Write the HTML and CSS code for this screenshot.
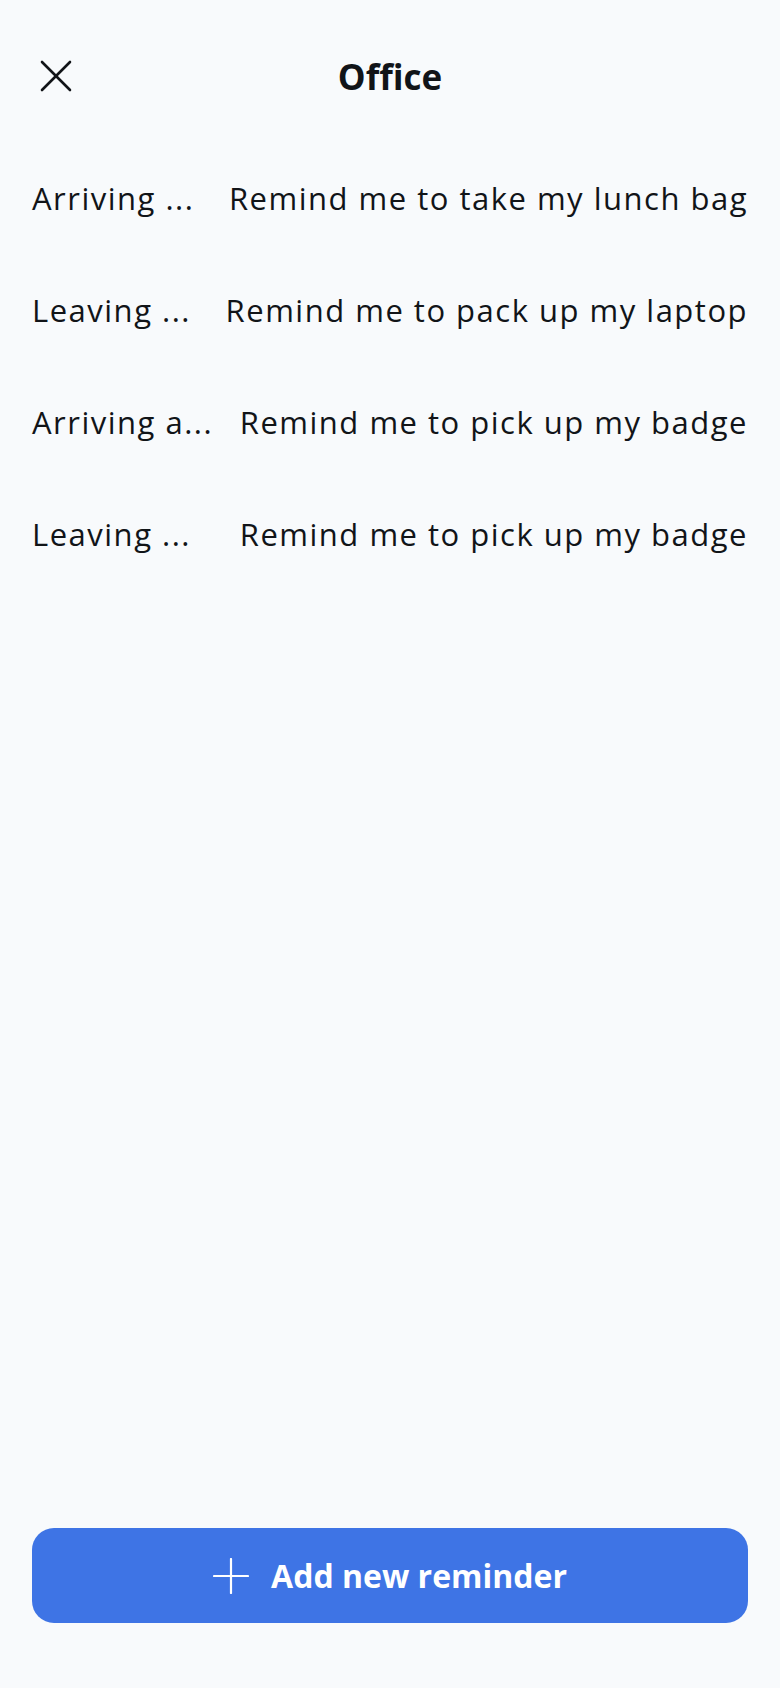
FILE: index.html
```html
<!DOCTYPE html>
<html lang="en">
<head>
<meta charset="utf-8">
<title>Office</title>
<link rel="stylesheet" href="styles.css">
</head>
<body>
<div class="screen">
  <header class="header">
    <button class="close" aria-label="Close">
      <svg width="32" height="32" viewBox="0 0 32 32" fill="none" stroke="#111418" stroke-width="2.6" stroke-linecap="round">
        <line x1="2" y1="2" x2="30" y2="30"/>
        <line x1="30" y1="2" x2="2" y2="30"/>
      </svg>
    </button>
    <h1 class="title">Office</h1>
    <div></div>
  </header>
  <ul class="list">
    <li class="row"><span class="trigger">Arriving ...</span><span class="reminder">Remind me to take my lunch bag</span></li>
    <li class="row"><span class="trigger">Leaving ...</span><span class="reminder">Remind me to pack up my laptop</span></li>
    <li class="row"><span class="trigger">Arriving a...</span><span class="reminder">Remind me to pick up my badge</span></li>
    <li class="row"><span class="trigger">Leaving ...</span><span class="reminder">Remind me to pick up my badge</span></li>
  </ul>
  <button class="add">
    <svg width="36" height="36" viewBox="0 0 36 36" fill="none" stroke="#ffffff" stroke-width="2.2" stroke-linecap="round">
      <line x1="18" y1="1" x2="18" y2="35"/>
      <line x1="1" y1="18" x2="35" y2="18"/>
    </svg>
    <span>Add new reminder</span>
  </button>
</div>
</body>
</html>
```

FILE: styles.css
```css
* { box-sizing: border-box; }
html, body { margin: 0; padding: 0; }
body {
  background: #f8fafc;
  color: #111418;
  font-family: "Open Sans", "Liberation Sans", sans-serif;
}
.screen {
  min-height: 100vh;
  display: flex;
  flex-direction: column;
}
.header {
  display: grid;
  grid-template-columns: 1fr auto 1fr;
  align-items: center;
  height: 132px;
  margin-top: 10px;
  padding: 0 40px;
}
.close {
  justify-self: start;
  background: none;
  border: 0;
  padding: 0;
  width: 32px;
  height: 32px;
  display: flex;
}
.title {
  margin: 0;
  font-size: 35px;
  font-weight: 700;
  letter-spacing: 0;
}
.list {
  list-style: none;
  margin: 0;
  padding: 0 32px;
  flex: 1;
}
.row {
  height: 112px;
  display: flex;
  align-items: center;
  gap: 24px;
  font-size: 31px;
  letter-spacing: 1.5px;
  white-space: nowrap;
}
.trigger {
  flex: 1;
  min-width: 0;
}
.reminder {
  flex: none;
}
.add {
  margin: 0 32px 65px;
  height: 95px;
  border: 0;
  border-radius: 22px;
  background: #3e74e5;
  color: #fff;
  display: flex;
  align-items: center;
  justify-content: center;
  gap: 22px;
  font-family: "Open Sans", "Liberation Sans", sans-serif;
  font-size: 32px;
  font-weight: 700;
  padding: 0;
}
```
